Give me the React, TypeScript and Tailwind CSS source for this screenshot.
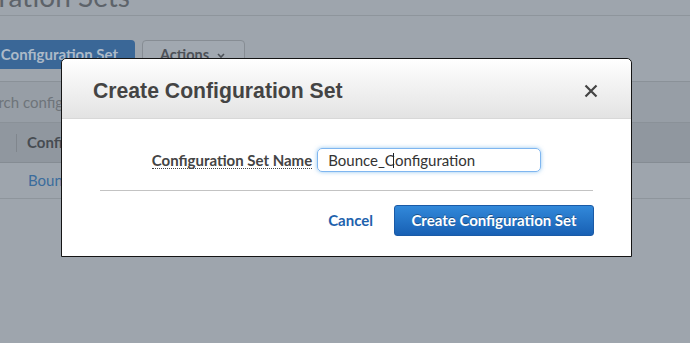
import React from "react";

const ub = { fontFamily: 'Lato, "Noto Sans", sans-serif' };

export default function App() {
  return (
    <div
      className="relative w-[690px] h-[343px] overflow-hidden bg-[#9ea5ad]"
      style={ub}
    >
      {/* background page (dimmed) */}
      <div className="flex flex-col">
        <div className="h-[15px] overflow-hidden border-b border-[#8e959c] box-content">
          <div className="flex w-[130px] justify-end mt-[-21px]">
            <span className="whitespace-nowrap text-[28px] leading-[34px] text-[#5d636a]">
              Configuration Sets
            </span>
          </div>
        </div>
        <div className="mt-[24px] flex h-[29px] gap-[7px]">
          <div className="flex w-[135px] justify-end overflow-hidden rounded-r-[4px] bg-[#3a6797] pr-[17px] items-center">
            <span className="whitespace-nowrap text-[15px] font-bold text-[#adbac8]">
              Create Configuration Set
            </span>
          </div>
          <div className="flex w-[103px] items-center gap-[8px] rounded-[4px] border border-[#878d94] bg-[#a1a8b0] pl-[17px]">
            <span className="text-[14.5px] font-bold text-[#4d5258]">Actions</span>
            <svg width="8" height="6" viewBox="0 0 8 6" className="mt-[2px]">
              <path d="M1 1 L4 4 L7 1" stroke="#4d5258" strokeWidth="1.6" fill="none" />
            </svg>
          </div>
        </div>
        <div className="mt-[12px] h-[42px] border-t border-b border-[#8a9198] bg-[#979ea6] flex items-center">
          <span className="ml-[-25px] whitespace-nowrap text-[15px] text-[#6e747a]">
            Search configuration sets
          </span>
        </div>
        <div className="h-[40px] border-b border-[#858c93] bg-[#90979f] flex items-center">
          <div className="ml-[16px] h-[18px] w-[1px] bg-[#80868d]" />
          <span className="ml-[10px] text-[15px] font-bold text-[#474c52]">
            Configuration Set Name
          </span>
        </div>
        <div className="h-[36px] border-b border-[#8e959c] flex items-center">
          <span className="ml-[28px] text-[15px] text-[#3a6c9c]">Bounce_Configuration</span>
        </div>
      </div>

      {/* modal */}
      <div className="absolute left-[61px] top-[58px] w-[571px] h-[199px] rounded-t-[5px] border border-[#151515] bg-white flex flex-col">
        <div className="h-[60px] rounded-t-[5px] border-b border-[#d8d8d8] bg-gradient-to-b from-[#ffffff] to-[#e3e3e3] flex items-center justify-between pl-[31px] pr-[33px] pt-[4px]">
          <span
            className="text-[21.2px] font-bold text-[#444444]"
            style={{ fontFamily: '"Liberation Sans", Arial, sans-serif' }}
          >
            Create Configuration Set
          </span>
          <svg width="14" height="14" viewBox="0 0 14 14">
            <path d="M1.5 1.5 L12.5 12.5 M12.5 1.5 L1.5 12.5" stroke="#444" strokeWidth="2.2" />
          </svg>
        </div>
        <div className="flex flex-col pt-[29px]">
          <div className="flex items-center justify-center gap-[5px]">
            <span className="text-[15px] font-bold text-[#444444] border-b border-dotted border-[#444] leading-[16px]">
              Configuration Set Name
            </span>
            <div className="flex h-[24px] w-[224px] items-center rounded-[5px] border border-[#7fb6f0] pl-[10px] shadow-[0_0_4px_rgba(102,175,233,0.7)]">
              <span className="text-[15px] text-[#333333] whitespace-nowrap">Bounce_C</span>
              <span className="ml-[-2px] mr-[1px] h-[15px] w-[1px] bg-[#222]" />
              <span className="text-[15px] text-[#333333] whitespace-nowrap">onfiguration</span>
            </div>
          </div>
          <div className="mx-[38px] mt-[18px] h-[1px] bg-[#c3c3c3]" />
          <div className="mt-[14px] mr-[37px] flex items-center justify-end gap-[21px]">
            <span className="text-[15px] font-bold text-[#1e62ad]">Cancel</span>
            <div className="flex h-[31px] w-[200px] items-center justify-center rounded-[3px] border border-[#1a5aa6] bg-gradient-to-b from-[#3289da] to-[#1860b4]">
              <span className="text-[15px] font-bold text-white [text-shadow:0_-1px_0_rgba(0,0,0,0.35)]">
                Create Configuration Set
              </span>
            </div>
          </div>
        </div>
      </div>
    </div>
  );
}
